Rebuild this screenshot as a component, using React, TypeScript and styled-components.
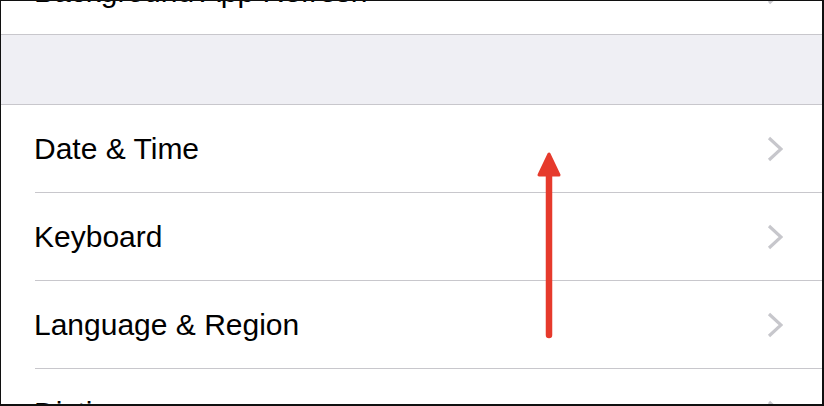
import React from "react";
import styled, { createGlobalStyle } from "styled-components";

const GlobalStyle = createGlobalStyle`
  html, body {
    margin: 0;
    padding: 0;
    background: #ffffff;
  }
  body {
    font-family: "Liberation Sans", Arial, sans-serif;
  }
`;

const Frame = styled.div`
  position: relative;
  box-sizing: border-box;
  width: 824px;
  height: 406px;
  overflow: hidden;
  background: #ffffff;
  border-style: solid;
  border-color: #101010;
  border-width: 1px 2px 2px 1px;
`;

// scrolled list: the first row is mostly above the fold
const List = styled.div`
  display: flex;
  flex-direction: column;
  margin-top: -51px;
`;

const Group = styled.div<{ $top?: boolean }>`
  display: flex;
  flex-direction: column;
  background: #ffffff;
  border-top: ${({ $top }) => ($top ? "1px solid #c8c7cc" : "none")};
  border-bottom: 1px solid #c8c7cc;
`;

const Gap = styled.div`
  height: 69px;
  background: #efeff4;
`;

const Row = styled.div<{ $last?: boolean; $height?: number }>`
  display: flex;
  align-items: center;
  height: ${({ $height }) => $height ?? 88}px;
  box-sizing: border-box;
  padding: 0 39px 0 33px;
  position: relative;

  &::after {
    content: "";
    display: ${({ $last }) => ($last ? "none" : "block")};
    position: absolute;
    left: 34px;
    right: 0;
    bottom: 0;
    height: 1px;
    background: #c8c7cc;
  }
`;

const Label = styled.span`
  flex: 1;
  font-size: 30px;
  color: #000000;
`;

const Chevron = styled.svg`
  width: 16px;
  height: 26px;
  flex-shrink: 0;
`;

const ArrowLayer = styled.svg`
  position: absolute;
  left: 530px;
  top: 145px;
  width: 40px;
  height: 200px;
  pointer-events: none;
`;

function ChevronIcon() {
  return (
    <Chevron viewBox="0 0 16 26">
      <polyline
        points="2,2 14,13 2,24"
        fill="none"
        stroke="#c7c7cc"
        strokeWidth="3.2"
        strokeLinejoin="miter"
      />
    </Chevron>
  );
}

function SettingsRow({
  label,
  last,
  height,
}: {
  label: string;
  last?: boolean;
  height?: number;
}) {
  return (
    <Row $last={last} $height={height}>
      <Label>{label}</Label>
      <ChevronIcon />
    </Row>
  );
}

function App() {
  return (
    <>
      <GlobalStyle />
      <Frame>
        <List>
          <Group>
            <SettingsRow label="Background App Refresh" last height={84} />
          </Group>
          <Gap />
          <Group $top>
            <SettingsRow label="Date & Time" />
            <SettingsRow label="Keyboard" />
            <SettingsRow label="Language & Region" />
            <SettingsRow label="Dictionary" />
          </Group>
        </List>
        <ArrowLayer viewBox="0 0 40 200">
          <line
            x1="18"
            y1="26"
            x2="18"
            y2="189"
            stroke="#e63a2c"
            strokeWidth="6.5"
            strokeLinecap="round"
          />
          <polygon
            points="18,8 8,29 28,29"
            fill="#e63a2c"
            stroke="#e63a2c"
            strokeWidth="3"
            strokeLinejoin="round"
          />
        </ArrowLayer>
      </Frame>
    </>
  );
}

export default App;
